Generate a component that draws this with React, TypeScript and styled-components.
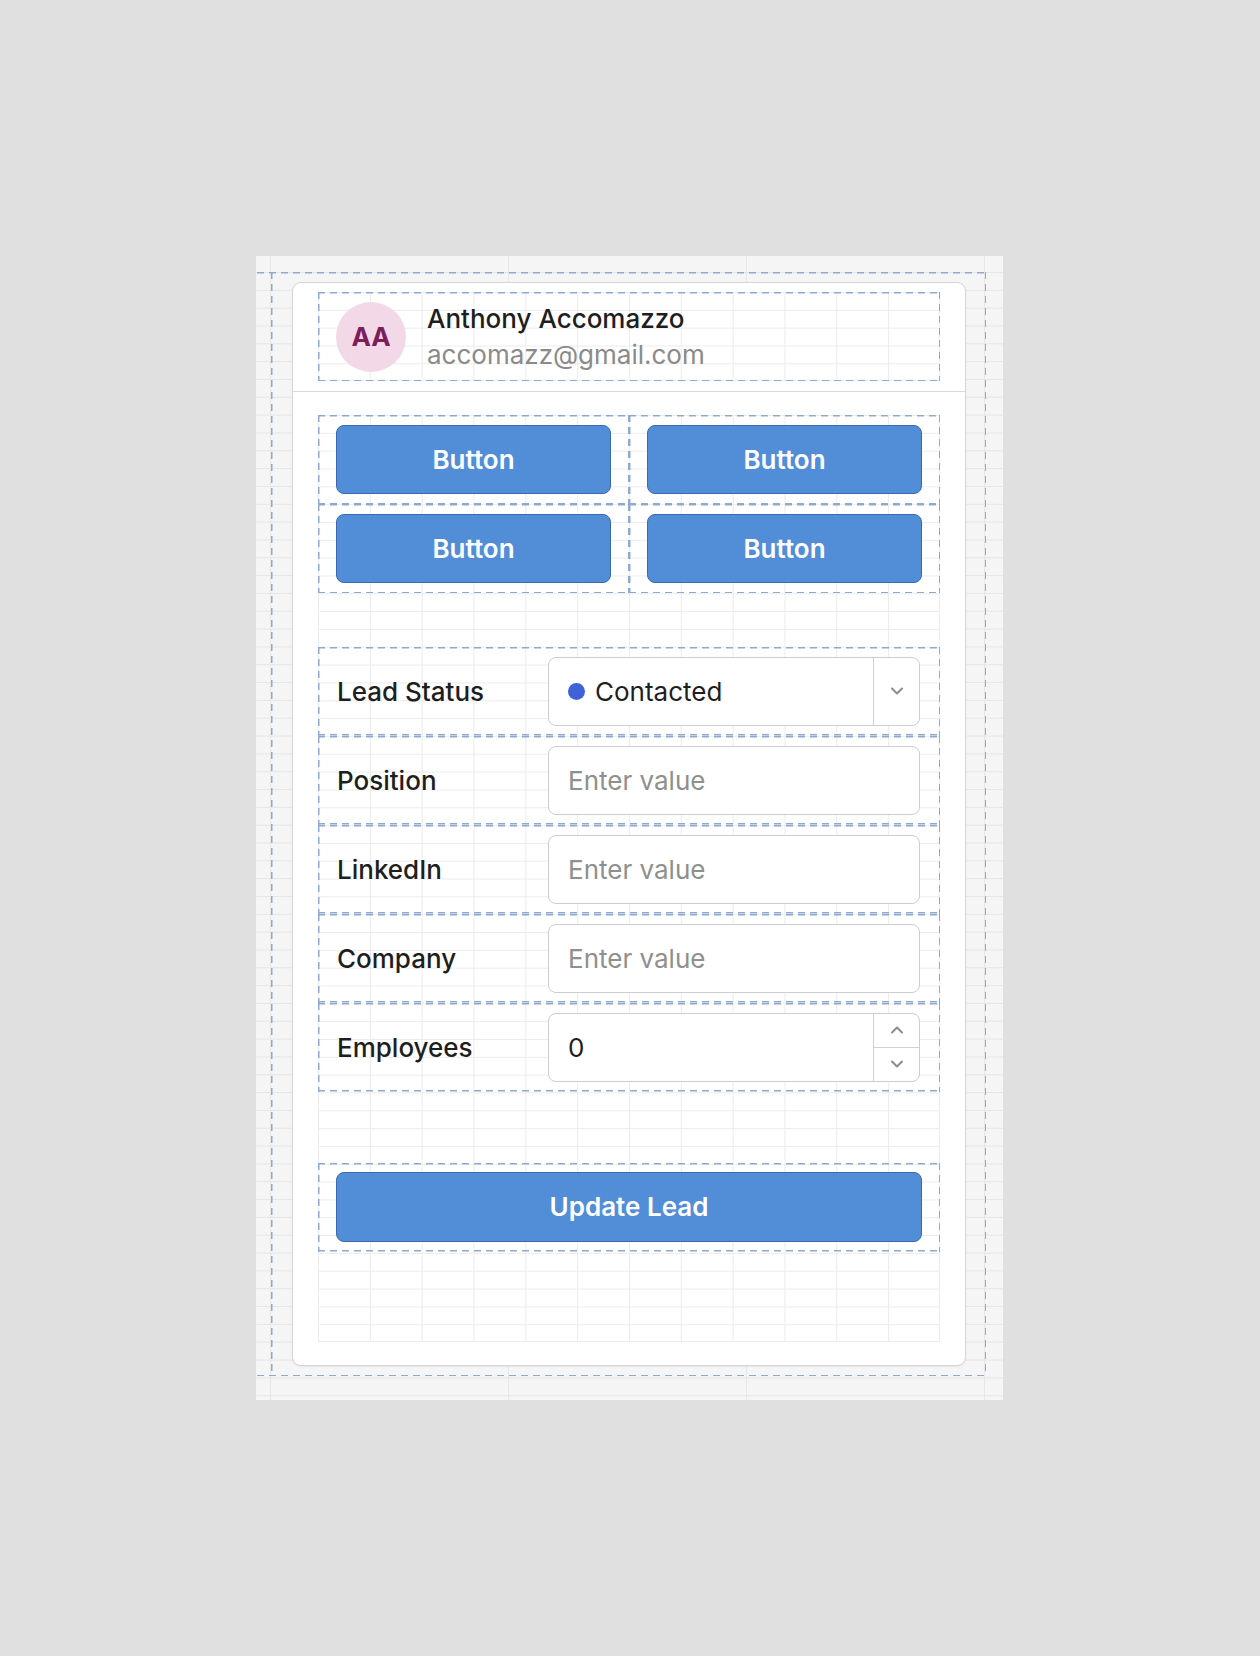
import styled, { createGlobalStyle, css } from "styled-components";
import { ChevronDown, ChevronUp } from "lucide-react";

const DASH = "#8fa9d1";
const GRID_LINE = "#ececec";
const ROW = "17.83px";

type Side = "top" | "bottom" | "left" | "right";

// dashed edges drawn with gradients so the dash length matches the editor
const dashed = (sides: Side[]) => {
  const layers = sides.map((s) =>
    s === "top" || s === "bottom"
      ? `repeating-linear-gradient(90deg, ${DASH} 0 7px, transparent 7px 12px)`
      : `repeating-linear-gradient(180deg, ${DASH} 0 7px, transparent 7px 12px)`
  );
  const sizes = sides.map((s) =>
    s === "top" || s === "bottom" ? "100% 1.5px" : "1.5px 100%"
  );
  const positions = sides.map((s) =>
    s === "top" ? "0 0" : s === "bottom" ? "0 100%" : s === "left" ? "0 0" : "100% 0"
  );
  return css`
    background-image: ${layers.join(", ")};
    background-size: ${sizes.join(", ")};
    background-position: ${positions.join(", ")};
    background-repeat: no-repeat;
  `;
};

const cardGrid = css`
  background-image: linear-gradient(90deg, ${GRID_LINE} 1px, transparent 1px),
    linear-gradient(180deg, ${GRID_LINE} 1px, transparent 1px);
  background-size: calc(100% / 12) ${ROW};
  box-shadow: inset -1px -1px 0 ${GRID_LINE};
`;

const GlobalStyle = createGlobalStyle`
  body {
    margin: 0;
    background: #e0e0e0;
    font-family: Inter, "Noto Sans", sans-serif;
    color: #1e1e1e;
  }
  * { box-sizing: border-box; }
`;

const Page = styled.div`
  min-height: 1656px;
  padding: 256px 0 0 256px;
`;

const Canvas = styled.div`
  width: 747px;
  height: 1144px;
  padding: 16px 0 0 1px;
  background-color: #f5f5f5;
  background-image: linear-gradient(90deg, #e6e6e6 1px, transparent 1px),
    linear-gradient(180deg, #e6e6e6 1px, transparent 1px);
  background-size: 238px ${ROW};
  background-position: 14px 16px;
`;

const Frame = styled.div`
  width: 729px;
  height: 1104px;
  padding-left: 14px;
  ${dashed(["top", "bottom", "right"])}
`;

const Column = styled.div`
  height: 100%;
  padding: 10px 20px 10px 21px;
  ${dashed(["left"])}
`;

const Card = styled.div`
  height: 1084px;
  background: #fff;
  border: 1px solid #d6d6d6;
  border-radius: 9px;
  box-shadow: 0 1px 2px rgba(0, 0, 0, 0.06);
  display: flex;
  flex-direction: column;
`;

const Header = styled.div`
  padding: 9px 25px 10px;
  border-bottom: 1px solid #d9d9d9;
`;

const GridArea = styled.div`
  ${cardGrid}
`;

const HeaderBox = styled.div`
  height: 89px;
  display: flex;
  align-items: center;
  gap: 21px;
  padding-left: 18px;
  ${dashed(["top", "bottom", "left", "right"])}
`;

const Avatar = styled.div`
  width: 70px;
  height: 70px;
  border-radius: 50%;
  background: #f3d8e7;
  color: #7c1d5c;
  font-size: 26px;
  font-weight: 700;
  display: flex;
  align-items: center;
  justify-content: center;
`;

const Who = styled.div`
  display: flex;
  flex-direction: column;
  font-size: 26px;
  line-height: 36px;
`;

const Name = styled.span`
  font-weight: 500;
  color: #1e1e1e;
`;

const Email = styled.span`
  color: #8a8a8a;
`;

const Body = styled.div`
  padding: 23px 25px 22px;
`;

const BodyGrid = styled(GridArea)`
  height: 927px;
`;

const ButtonGrid = styled.div`
  display: grid;
  grid-template-columns: 1fr 1fr;
  grid-auto-rows: 89px;
`;

const Cell = styled.div`
  padding: 10px 18px;
  ${dashed(["top", "bottom", "left", "right"])}
`;

const Button = styled.button`
  width: 100%;
  height: 100%;
  background: #528ed8;
  border: 1px solid #3a69ad;
  border-radius: 8px;
  color: #fff;
  font-family: Inter, "Noto Sans", sans-serif;
  font-size: 26px;
  font-weight: 600;
  cursor: pointer;
`;

const Form = styled.div<{ gap: string }>`
  margin-top: ${(p) => p.gap};
  display: flex;
  flex-direction: column;
`;

const FieldRow = styled.div`
  height: 89px;
  display: grid;
  grid-template-columns: 211px 1fr;
  align-items: center;
  padding: 0 20px 0 19px;
  ${dashed(["top", "bottom", "left", "right"])}
`;

const Label = styled.span`
  font-size: 26px;
  font-weight: 500;
  color: #1e1e1e;
`;

const Field = styled.div`
  height: 69px;
  display: flex;
  background: #fff;
  border: 1px solid #cdcdcd;
  border-radius: 8px;
  overflow: hidden;
`;

const Value = styled.div<{ muted?: boolean }>`
  flex: 1;
  display: flex;
  align-items: center;
  gap: 10px;
  padding-left: 19px;
  font-size: 26px;
  color: ${(p) => (p.muted ? "#8f8f8f" : "#1e1e1e")};
`;

const Dot = styled.span`
  width: 17px;
  height: 17px;
  border-radius: 50%;
  background: #4062d8;
`;

const Side = styled.div`
  width: 46px;
  border-left: 1px solid #d2d2d2;
  display: flex;
  flex-direction: column;
`;

const Step = styled.div`
  flex: 1;
  display: flex;
  align-items: center;
  justify-content: center;
  color: #8c8c8c;
  & + & {
    border-top: 1px solid #d2d2d2;
  }
`;

const SubmitRow = styled.div`
  margin-top: 71px;
  height: 89px;
  padding: 9px 18px 10px;
  ${dashed(["top", "bottom", "left", "right"])}
`;

const fields = [
  { label: "Position" },
  { label: "LinkedIn" },
  { label: "Company" },
];

export default function App() {
  return (
    <Page>
      <GlobalStyle />
      <Canvas>
        <Frame>
          <Column>
            <Card>
              <Header>
                <GridArea>
                  <HeaderBox>
                    <Avatar>AA</Avatar>
                    <Who>
                      <Name>Anthony Accomazzo</Name>
                      <Email>accomazz@gmail.com</Email>
                    </Who>
                  </HeaderBox>
                </GridArea>
              </Header>
              <Body>
                <BodyGrid>
                  <ButtonGrid>
                    {[0, 1, 2, 3].map((i) => (
                      <Cell key={`btn_${i}`}>
                        <Button>Button</Button>
                      </Cell>
                    ))}
                  </ButtonGrid>
                  <Form gap="53.5px">
                    <FieldRow>
                      <Label>Lead Status</Label>
                      <Field>
                        <Value>
                          <Dot />
                          Contacted
                        </Value>
                        <Side>
                          <Step>
                            <ChevronDown size={20} strokeWidth={2.4} />
                          </Step>
                        </Side>
                      </Field>
                    </FieldRow>
                    {fields.map((f) => (
                      <FieldRow key={f.label}>
                        <Label>{f.label}</Label>
                        <Field>
                          <Value muted>Enter value</Value>
                        </Field>
                      </FieldRow>
                    ))}
                    <FieldRow>
                      <Label>Employees</Label>
                      <Field>
                        <Value>0</Value>
                        <Side>
                          <Step>
                            <ChevronUp size={20} strokeWidth={2.4} />
                          </Step>
                          <Step>
                            <ChevronDown size={20} strokeWidth={2.4} />
                          </Step>
                        </Side>
                      </Field>
                    </FieldRow>
                  </Form>
                  <SubmitRow>
                    <Button>Update Lead</Button>
                  </SubmitRow>
                </BodyGrid>
              </Body>
            </Card>
          </Column>
        </Frame>
      </Canvas>
    </Page>
  );
}
